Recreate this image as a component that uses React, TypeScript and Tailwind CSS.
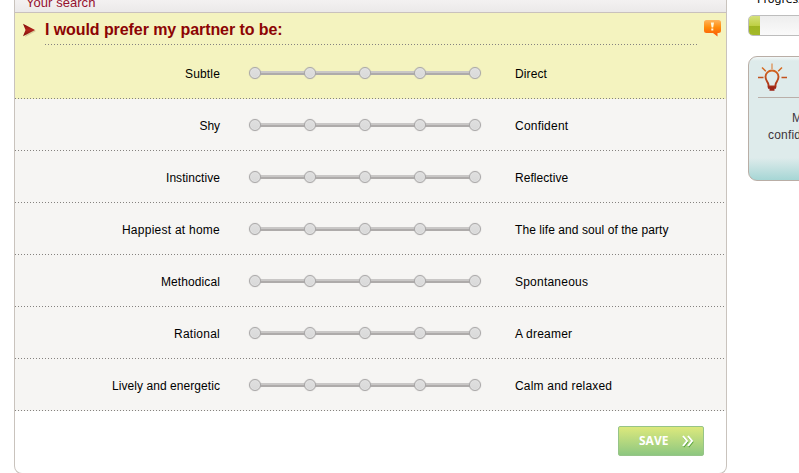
const rows: [string, string, string, string][] = [
  ['Subtle', 'Direct', 'tracking-[0.150px]', 'tracking-[0.100px]'],
  ['Shy', 'Confident', 'tracking-[-0.100px]', 'tracking-[0.220px]'],
  ['Instinctive', 'Reflective', 'tracking-[0.060px]', 'tracking-[0.050px]'],
  ['Happiest at home', 'The life and soul of the party', 'tracking-[0.250px]', 'tracking-[0.070px]'],
  ['Methodical', 'Spontaneous', 'tracking-[0.100px]', 'tracking-[0.220px]'],
  ['Rational', 'A dreamer', 'tracking-[0.250px]', 'tracking-[0.220px]'],
  ['Lively and energetic', 'Calm and relaxed', 'tracking-[0.060px]', 'tracking-[0.200px]'],
];

function Dots({ className = '' }: { className?: string }) {
  return (
    <div
      className={`h-px bg-[repeating-linear-gradient(90deg,#85827f_0px,#85827f_1px,transparent_1px,transparent_3px)] ${className}`}
    />
  );
}

function Scale() {
  return (
    <div className="grid h-3 w-[232px] shrink-0 items-center">
      <div className="col-start-1 row-start-1 mx-1.5 h-1 border-t-2 border-b-2 border-t-[#c9c7c6] border-b-[#aeabaa]" />
      <div className="col-start-1 row-start-1 flex justify-between">
        {[1, 2, 3, 4, 5].map((n) => (
          <span
            key={n}
            className="z-10 size-3 rounded-full border border-[#a9a7a7] bg-linear-to-b from-[#dfdfdf] to-[#d9d9d9] shadow-[inset_0_0_0_1px_#e3e3e3,0_0_1px_#b5b3b3]"
          />
        ))}
      </div>
    </div>
  );
}

function Row({ row }: { row: [string, string, string, string] }) {
  return (
    <div className="flex h-[51px] items-center">
      <span className={`w-[205px] shrink-0 pt-0.5 text-right ${row[2]}`}>{row[0]}</span>
      <div className="ml-[29px]">
        <Scale />
      </div>
      <span className={`ml-[34px] pt-0.5 ${row[3]}`}>{row[1]}</span>
    </div>
  );
}

function Arrow() {
  return (
    <svg width="14" height="14" viewBox="0 0 14 14" className="shrink-0">
      <defs>
        <linearGradient id="arrow" x2="0" y2="1">
          <stop stopColor="#7f0906" />
          <stop offset=".5" stopColor="#b3241c" />
          <stop offset="1" stopColor="#7b0b07" />
        </linearGradient>
      </defs>
      <path d="M2 2 13 8 2 14 4 8Z" fill="#b7a775" opacity=".5" />
      <path d="M0 .8 12 7 0 13.200 2.500 7Z" fill="url(#arrow)" />
    </svg>
  );
}

function Alert() {
  return (
    <svg width="17" height="17" viewBox="0 0 17 17" className="shrink-0">
      <defs>
        <linearGradient id="alert" x2="0" y2="1">
          <stop stopColor="#ffb45c" />
          <stop offset=".45" stopColor="#ff8c0b" />
          <stop offset="1" stopColor="#fb5307" />
        </linearGradient>
      </defs>
      <path d="M2.500 0h12Q17 0 17 2.500v8q0 2.500-2.500 2.500H13.500V16.500L9 13H2.500Q0 13 0 10.500V2.500Q0 0 2.500 0Z" fill="url(#alert)" />
      <path d="M6.800 2.500h3.200L9.200 7.500H7.600ZM7.300 8.500h2v2h-2Z" fill="#fff9dc" />
    </svg>
  );
}

function Bulb() {
  return (
    <svg width="29" height="28" viewBox="0 0 29 28" fill="none" stroke="url(#bulb)" strokeWidth="1.500">
      <defs>
        <linearGradient id="bulb" gradientUnits="userSpaceOnUse" x1="0" y1="0" x2="0" y2="28">
          <stop stopColor="#e57b23" />
          <stop offset="1" stopColor="#9d2417" />
        </linearGradient>
      </defs>
      <path d="M13.500 .5h1V6h-1Z" fill="#de7424" stroke="none" />
      <path d="M4 4.500 7.800 8.300M24 4.500 20.200 8.300" />
      <path d="M0 14.500h5.500M23.500 14.500H29" stroke="#c2521d" />
      <path d="M10.500 23.500v-1.700C10.200 19.200 7.500 17.700 7.500 13.800a6.500 6.300 0 0 1 13 0c0 3.900-2.700 5.400-3 8v1.700Z" strokeWidth="1.900" />
      <path d="M10 24.700h8M11.500 26.700h5" stroke="#9d2417" strokeWidth="1.900" />
    </svg>
  );
}

export default function App() {
  return (
    <div className="flex h-[473px] w-[799px] overflow-hidden bg-white pl-3.5 font-['Liberation_Sans',Arial,sans-serif] text-xs text-black">
      <main className="flex h-[474px] w-[713px] shrink-0 flex-col overflow-hidden rounded-b-[8px] border-x border-b border-[#c9c3bd]">
        <header className="flex h-[13px] shrink-0 items-end border-b border-[#c9c1bd] bg-linear-to-b from-[#f3f1f1] to-[#ebe9e9] pl-[11px]">
          <span className="mb-[2px] text-[13px] leading-[14px] tracking-[0.050px] text-[#96112f]">Your search</span>
        </header>

        <section className="h-[85px] shrink-0 bg-[#f4f3bf]">
          <div className="flex h-[31px] pl-2">
            <div className="pt-2.5">
              <Arrow />
            </div>
            <h1 className="ml-2 w-[653px] pt-[7px] text-base leading-5 font-bold tracking-[-0.080px] text-[#8c0404]">
              I would prefer my partner to be:
            </h1>
            <div className="ml-1.5 pt-[7px]">
              <Alert />
            </div>
          </div>
          <Dots className="ml-[30px] w-[653px]" />
          <div className="pt-[2px]">
            <Row row={rows[0]} />
          </div>
        </section>

        <div className="shrink-0 bg-[#f6f5f3]">
          <Dots className="bg-[#f4f3bf]" />
          {rows.slice(1).map((row) => (
            <div key={row[0]}>
              <Row row={row} />
              <Dots />
            </div>
          ))}
        </div>

        <footer className="flex justify-end pt-[15px] pr-[22px]">
          <button className="flex h-[30px] w-[86px] items-center rounded-[2px] border border-[#96c488] bg-linear-to-b from-[#dce97c] to-[#8dc780] pl-5 font-['Open_Sans',sans-serif] text-xs font-bold text-white">
            SAVE
            <svg width="12" height="13" viewBox="0 0 12 13" fill="none" className="ml-[14px]">
              <path d="m1.500 2 4 5-4 5M6.500 2l4 5-4 5" stroke="#56a239" strokeWidth="1.800" />
              <path d="m1 1 4 5-4 5M6 1l4 5-4 5" stroke="#fff" strokeWidth="2" />
            </svg>
          </button>
        </footer>
      </main>

      <aside className="ml-[21px] w-[180px] shrink-0">
        <div className="flex h-[15px] items-end pl-[9px]">
          <span className="mb-2 font-['DejaVu_Sans',Verdana,sans-serif] text-[11px] leading-[14px]">Progress</span>
        </div>
        <div className="flex h-[21px] overflow-hidden rounded-[5px] border border-[#bdbdbd] bg-linear-to-b from-[#eeeeee] to-[#fafafa]">
          <div className="w-[11px] bg-[linear-gradient(#d5e17a,#bfd046_50%,#9fb521_51%,#a4b92a)]" />
        </div>
        <div className="mt-5 h-[125px] rounded-[9px] border border-[#b9aea6] bg-[linear-gradient(#f2f7f7,#deebeb_4px,#deebeb_101px,#a6d6d5)] pl-[9px]">
          <div className="h-[41px] border-b border-[#b9afa9] pt-[6px]">
            <Bulb />
          </div>
          <p className="w-[150px] pt-3 text-center leading-[17px] text-[#40343c]">
            <span className="block pl-[34px] text-left">Make</span>
            <span className="block pl-2.5 text-left tracking-[0.200px]">confident</span>
          </p>
        </div>
      </aside>
    </div>
  );
}
